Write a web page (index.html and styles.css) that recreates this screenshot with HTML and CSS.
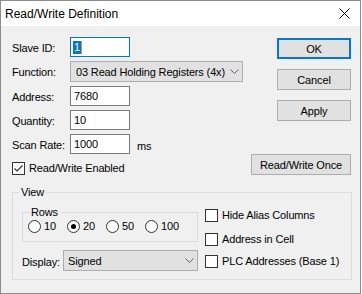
FILE: index.html
```html
<!DOCTYPE html>
<html lang="en">
<head>
    <meta charset="UTF-8">
    <title>Read/Write Definition</title>
    <link rel="stylesheet" href="styles.css">
</head>
<body>
    <div class="window">
        <div class="titlebar">
            <span class="title">Read/Write Definition</span>
            <svg class="close" width="11" height="11" viewBox="0 0 11 11"><path d="M0.5 0.5L10.5 10.5M10.5 0.5L0.5 10.5" stroke="#000" stroke-width="1" fill="none"/></svg>
        </div>
        <div class="client">
            <div class="top">
                <div class="form">
                    <div class="row">
                        <span class="lbl">Slave ID:</span>
                        <div class="edit focus"><span class="sel">1</span><span class="caret"></span></div>
                    </div>
                    <div class="row combo-row">
                        <span class="lbl">Function:</span>
                        <div class="combo func">
                            <span>03 Read Holding Registers (4x)</span>
                            <svg class="chev" width="9" height="5" viewBox="0 0 9 5"><path d="M0.5 0.5L4.5 4.5L8.5 0.5" stroke="#606060" fill="none"/></svg>
                        </div>
                    </div>
                    <div class="row">
                        <span class="lbl">Address:</span>
                        <div class="edit">7680</div>
                    </div>
                    <div class="row">
                        <span class="lbl">Quantity:</span>
                        <div class="edit">10</div>
                    </div>
                    <div class="row">
                        <span class="lbl">Scan Rate:</span>
                        <div class="edit">1000</div>
                        <span class="unit">ms</span>
                    </div>
                    <div class="check enabled">
                        <span class="box"><svg width="11" height="11" viewBox="0 0 11 11"><path d="M1.5 5.5L4 8L9.5 2.5" stroke="#333" stroke-width="1.2" fill="none"/></svg></span>
                        <span>Read/Write Enabled</span>
                    </div>
                </div>
                <div class="buttons">
                    <div class="btn default">OK</div>
                    <div class="btn">Cancel</div>
                    <div class="btn">Apply</div>
                    <div class="btn once">Read/Write Once</div>
                </div>
            </div>

            <fieldset class="group view">
                <legend>View</legend>
                <div class="view-body">
                    <div class="view-left">
                        <fieldset class="group rows">
                            <legend>Rows</legend>
                            <div class="radios">
                                <label class="radio"><span class="dot"></span>10</label>
                                <label class="radio"><span class="dot on"></span>20</label>
                                <label class="radio"><span class="dot"></span>50</label>
                                <label class="radio last"><span class="dot"></span>100</label>
                            </div>
                        </fieldset>
                        <div class="display-row">
                            <span class="lbl-d">Display:</span>
                            <div class="combo disp">
                                <span>Signed</span>
                                <svg class="chev" width="9" height="5" viewBox="0 0 9 5"><path d="M0.5 0.5L4.5 4.5L8.5 0.5" stroke="#606060" fill="none"/></svg>
                            </div>
                        </div>
                    </div>
                    <div class="view-right">
                        <div class="check c1"><span class="box"></span><span>Hide Alias Columns</span></div>
                        <div class="check c2"><span class="box"></span><span>Address in Cell</span></div>
                        <div class="check c3"><span class="box"></span><span>PLC Addresses (Base 1)</span></div>
                    </div>
                </div>
            </fieldset>
        </div>
    </div>
</body>
</html>
```

FILE: styles.css
```css
* {
    box-sizing: border-box;
}
body {
    margin: 0;
    background: #fff;
    font-family: "Liberation Sans", Arial, sans-serif;
    font-size: 11px;
    letter-spacing: -0.15px;
    color: #000;
}
.window {
    width: 361px;
    height: 294px;
    border: 1px solid #8c8c8c;
    background: #f0f0f0;
    display: flex;
    flex-direction: column;
}
.titlebar {
    height: 25px;
    background: #fff;
    display: flex;
    align-items: center;
    justify-content: space-between;
    padding: 0 10px 0 4px;
}
.title {
    font-size: 12px;
    letter-spacing: 0;
    line-height: 14px;
}
.close {
    display: block;
}
.client {
    padding: 11px 9px 0 11px;
}
.top {
    display: flex;
}
.form {
    flex: 1;
    display: flex;
    flex-direction: column;
    gap: 4px;
}
.row {
    display: flex;
    align-items: center;
    height: 20px;
}
.combo-row {
    height: 21px;
}
.lbl {
    width: 58px;
    padding-top: 2px;
    line-height: 13px;
}
.edit {
    width: 60px;
    height: 20px;
    background: #fff;
    border: 1px solid #7a7a7a;
    padding: 0 3px;
    line-height: 17px;
    display: flex;
    align-items: center;
}
.edit.focus {
    border-color: #0078d7;
}
.sel {
    background: #0078d7;
    color: #fff;
    margin-left: -1px;
    padding: 0 1px;
    line-height: 13px;
}
.caret {
    width: 1px;
    height: 13px;
    background: #e08a3c;
}
.unit {
    margin-left: 7px;
    padding-top: 3px;
}
.combo {
    height: 21px;
    background: #e1e1e1;
    border: 1px solid #adadad;
    display: flex;
    align-items: center;
    justify-content: space-between;
    padding: 0 3px 0 5px;
}
.func {
    width: 173px;
}
.disp {
    width: 135px;
    padding-left: 4px;
}
.chev {
    display: block;
}
.check {
    display: flex;
    align-items: center;
    height: 13px;
    gap: 4px;
    line-height: 13px;
}
.check.enabled {
    margin-top: 4px;
}
.box {
    width: 13px;
    height: 13px;
    border: 1px solid #333;
    background: #fff;
    display: flex;
    align-items: center;
    justify-content: center;
}
.box svg {
    display: block;
}
.buttons {
    width: 74px;
    display: flex;
    flex-direction: column;
    gap: 10px;
    padding-top: 1px;
}
.btn {
    height: 21px;
    background: #e1e1e1;
    border: 1px solid #adadad;
    display: flex;
    align-items: center;
    justify-content: center;
}
.btn.default {
    border: 2px solid #0078d7;
}
.btn.once {
    width: 100px;
    margin-left: -26px;
    margin-top: auto;
}
.group {
    border: 1px solid #dcdcdc;
    margin: 0;
    min-width: 0;
}
.group legend {
    padding: 0 2px;
    line-height: 13px;
}
.view {
    margin: 11px -1px 0 0;
    padding: 7px 0 8px 6px;
}
.view-body {
    display: flex;
    gap: 7px;
    margin-left: 3px;
}
.view-left {
    width: 176px;
}
.rows {
    padding: 0 0 8px 6px;
}
.radios {
    display: flex;
    height: 14px;
    align-items: center;
    margin-left: -1px;
}
.radio {
    width: 39px;
    display: flex;
    align-items: center;
    gap: 3px;
    line-height: 13px;
}
.radio.last {
    width: auto;
}
.dot {
    width: 13px;
    height: 13px;
    border: 1px solid #333;
    border-radius: 50%;
    background: #fff;
    display: flex;
    align-items: center;
    justify-content: center;
}
.dot.on::after {
    content: "";
    width: 5px;
    height: 5px;
    border-radius: 50%;
    background: #000;
}
.display-row {
    display: flex;
    align-items: center;
    margin-top: 8px;
}
.lbl-d {
    width: 41px;
    padding-top: 2px;
}
.view-right {
    display: flex;
    flex-direction: column;
}
.c1 {
    margin-top: 3px;
}
.c2 {
    margin-top: 11px;
}
.c3 {
    margin-top: 9px;
}
```
